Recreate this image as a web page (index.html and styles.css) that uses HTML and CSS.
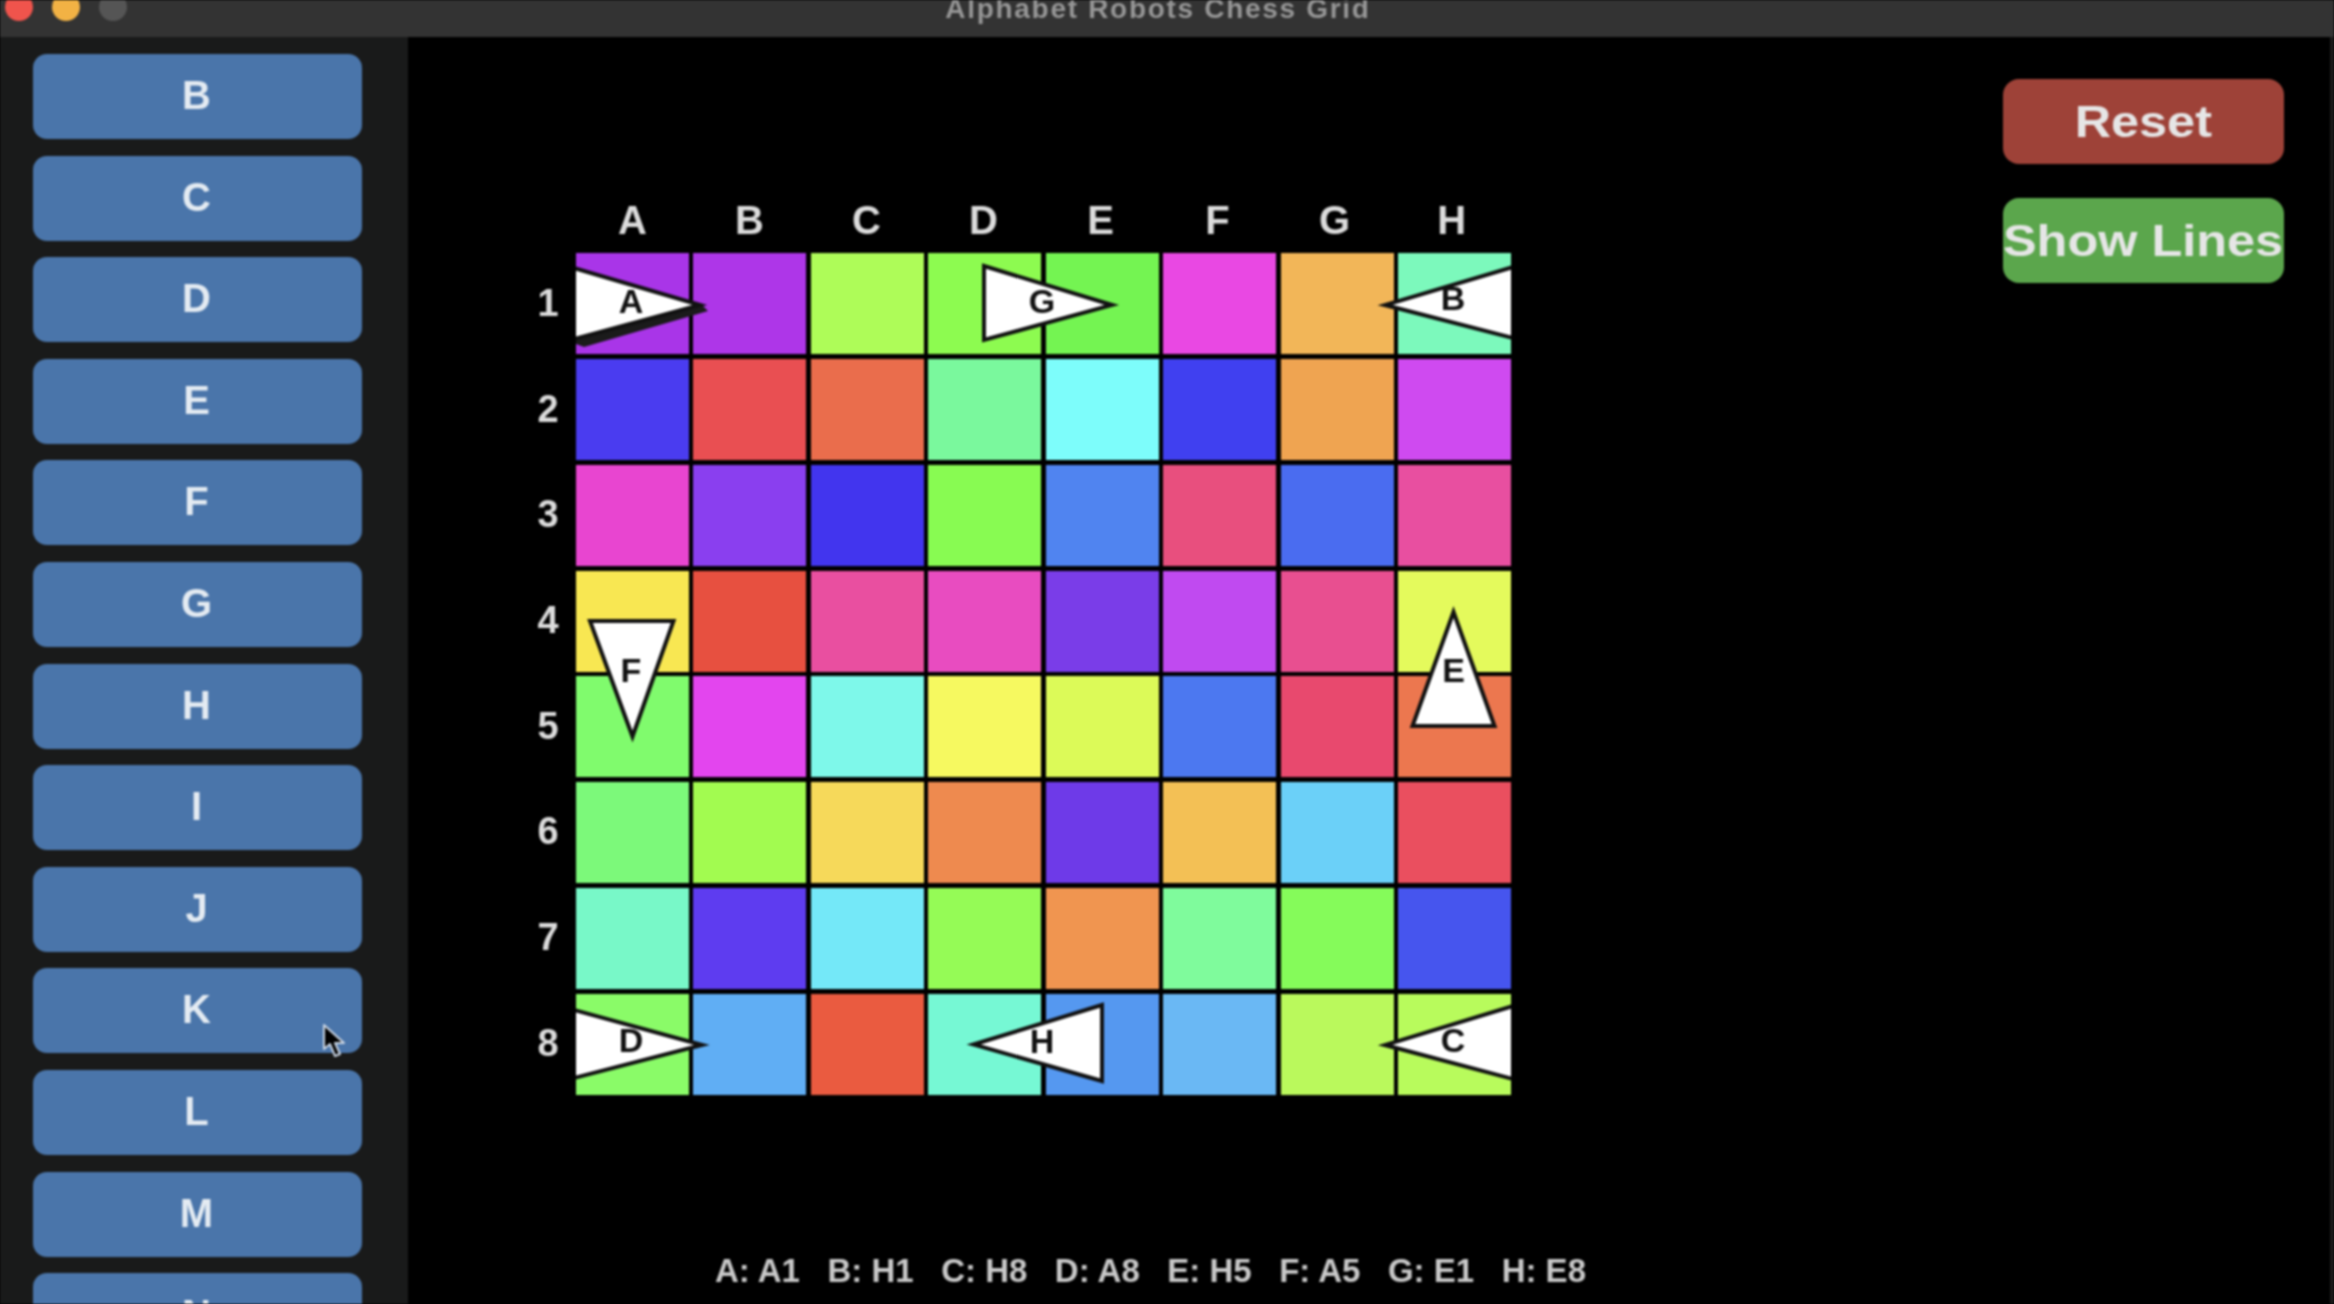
FILE: index.html
```html
<!DOCTYPE html>
<html lang="en">
<head>
<meta charset="utf-8">
<title>Alphabet Robots Chess Grid</title>
<link rel="stylesheet" href="styles.css">
</head>
<body>
<div class="window">
  <header class="titlebar">
    <div class="lights"><i class="light red"></i><i class="light amber"></i><i class="light off"></i></div>
    <div class="title">Alphabet Robots Chess Grid</div>
  </header>
  <div class="content">
    <aside class="sidebar">
      <button class="letter">B</button>
      <button class="letter">C</button>
      <button class="letter">D</button>
      <button class="letter">E</button>
      <button class="letter">F</button>
      <button class="letter">G</button>
      <button class="letter">H</button>
      <button class="letter">I</button>
      <button class="letter">J</button>
      <button class="letter">K</button>
      <button class="letter">L</button>
      <button class="letter">M</button>
      <button class="letter">N</button>
    </aside>
    <main class="main">
      <section class="play">
        <div class="board">
          <div class="corner"></div>
          <div class="col-labels"><span>A</span><span>B</span><span>C</span><span>D</span><span>E</span><span>F</span><span>G</span><span>H</span></div>
          <div class="row-labels"><span>1</span><span>2</span><span>3</span><span>4</span><span>5</span><span>6</span><span>7</span><span>8</span></div>
          <div class="field">
            <div class="cells">
              <div style="background:#a935e8"></div><div style="background:#ae36e8"></div><div style="background:#aefc58"></div><div style="background:#8dfb50"></div><div style="background:#74f452"></div><div style="background:#e948e3"></div><div style="background:#f2b658"></div><div style="background:#7cf9bc"></div>
              <div style="background:#4a3cf0"></div><div style="background:#e94f52"></div><div style="background:#ea6d4c"></div><div style="background:#7af89d"></div><div style="background:#7dfdfb"></div><div style="background:#4040f0"></div><div style="background:#efa451"></div><div style="background:#cf4af0"></div>
              <div style="background:#e845d0"></div><div style="background:#8a3fef"></div><div style="background:#4235ee"></div><div style="background:#88fb52"></div><div style="background:#5084f0"></div><div style="background:#e84f7e"></div><div style="background:#4a6cf0"></div><div style="background:#e84fa0"></div>
              <div style="background:#f8e752"></div><div style="background:#e75040"></div><div style="background:#e94fa0"></div><div style="background:#e84cc0"></div><div style="background:#7a3de8"></div><div style="background:#c04af0"></div><div style="background:#e84f90"></div><div style="background:#e4fa5c"></div>
              <div style="background:#80fb6d"></div><div style="background:#e345ee"></div><div style="background:#7ef8ea"></div><div style="background:#f6f960"></div><div style="background:#dcfa58"></div><div style="background:#4c78f0"></div><div style="background:#e8496e"></div><div style="background:#ec774f"></div>
              <div style="background:#7cf97a"></div><div style="background:#a2fb50"></div><div style="background:#f6d95a"></div><div style="background:#ee8a4f"></div><div style="background:#6e3ae8"></div><div style="background:#f3c055"></div><div style="background:#6bd0f8"></div><div style="background:#ea4f5f"></div>
              <div style="background:#78f8c8"></div><div style="background:#5e3cf0"></div><div style="background:#74e8f8"></div><div style="background:#95fb56"></div><div style="background:#f09550"></div><div style="background:#7ffb9c"></div><div style="background:#85fb5a"></div><div style="background:#4655ee"></div>
              <div style="background:#8afb68"></div><div style="background:#60aef4"></div><div style="background:#ea5b40"></div><div style="background:#76f8d4"></div><div style="background:#5598f0"></div><div style="background:#6ab8f4"></div><div style="background:#baf95c"></div><div style="background:#b8fb5c"></div>
            </div>
            <svg class="robots" viewBox="0 0 935 842" width="935" height="842" aria-label="Robots">
              <polygon class="trail" points="0,84 124,50 132,58 8,94 0,91"/>
              <polygon class="robot" points="-2,15 124,52 -2,86"/>
              <text x="55" y="60">A</text>
              <polygon class="robot" points="408,13 536,52 408,87"/>
              <text x="466" y="60">G</text>
              <polygon class="robot" points="937,14 809,52 937,85"/>
              <text x="877" y="57">B</text>
              <polygon class="robot" points="526,752 397.5,791.5 526,828"/>
              <text x="466" y="800">H</text>
              <polygon class="robot" points="937,753 809,792 937,826"/>
              <text x="877" y="799">C</text>
              <polygon class="robot" points="-2,757 126,792 -2,825"/>
              <text x="55" y="799">D</text>
              <polygon class="robot" points="14,368 97.5,368 56.5,483.5"/>
              <text x="55" y="429">F</text>
              <polygon class="robot" points="877.5,359 836.5,473 918.5,473"/>
              <text x="877.5" y="429">E</text>
            </svg>
          </div>
        </div>
        <div class="status">
          <span>A: A1</span><span>B: H1</span><span>C: H8</span><span>D: A8</span><span>E: H5</span><span>F: A5</span><span>G: E1</span><span>H: E8</span>
        </div>
      </section>
      <div class="actions">
        <button class="action reset"><span>Reset</span></button>
        <button class="action lines"><span>Show Lines</span></button>
      </div>
    </main>
  </div>
  <svg class="cursor" viewBox="0 0 26 38" width="26" height="38" aria-hidden="true">
    <path d="M3 2 L3 26 L9 21 L14 33 L19 31 L14 20 L23 20 Z" fill="#000" stroke="#c9d4e2" stroke-width="2" stroke-linejoin="round"/>
  </svg>
</div>
</body>
</html>
```

FILE: styles.css
```css
* { box-sizing: border-box; }
html, body { margin: 0; height: 100%; background: #000; overflow: hidden; }
body { font-family: "Liberation Sans", Arial, sans-serif; }

.window {
  position: relative;
  width: 2334px;
  height: 1304px;
  display: flex;
  flex-direction: column;
  overflow: hidden;
  filter: blur(1.3px);
  background: #000;
}

.titlebar {
  position: relative;
  flex: 0 0 37px;
  background: #333;
  overflow: hidden;
  display: flex;
  justify-content: center;
}
.lights {
  position: absolute;
  left: 5px;
  top: -7px;
  display: flex;
  gap: 19px;
}
.light { width: 28px; height: 28px; border-radius: 50%; display: block; }
.red { background: #f0544c; }
.amber { background: #f2b244; }
.off { background: #555; }
.title {
  margin: -8px 18px 0 0;
  font-size: 28px;
  line-height: 34px;
  font-weight: bold;
  color: #969696;
  letter-spacing: 1.7px;
}

.content { flex: 1; display: flex; min-height: 0; }

.sidebar {
  flex: 0 0 408px;
  background: #191a1a;
  padding: 17px 46px 0 33px;
  display: flex;
  flex-direction: column;
  gap: 16.6px;
  overflow: hidden;
}
.letter {
  flex: 0 0 85px;
  width: 100%;
  border: 0;
  padding: 0 2px 2px 0;
  border-radius: 14px;
  background: #4a75aa;
  color: #e4ebf2;
  font-family: inherit;
  font-size: 40px;
  font-weight: bold;
}

.main {
  flex: 1;
  display: flex;
  justify-content: space-between;
  padding: 42px 46px 0 112px;
  background: #000;
  border-right: 4px solid #1a1a1a;
}

.play { padding-top: 115px; }

.board {
  display: grid;
  grid-template-columns: 56px 935px;
  grid-template-rows: 59px 842px;
}
.col-labels {
  display: grid;
  grid-template-columns: repeat(8, 1fr);
  gap: 4.4px;
  height: 50px;
  padding-right: 3px;
  text-align: center;
  font-size: 40px;
  line-height: 52px;
  font-weight: bold;
  color: #dcdcdc;
}
.row-labels {
  display: grid;
  grid-template-rows: repeat(8, 1fr);
  gap: 4.9px;
  padding-bottom: 1.5px;
  text-align: center;
  font-size: 38px;
  font-weight: bold;
  color: #dcdcdc;
}
.row-labels span { align-self: center; }

.field { position: relative; background: #000; }
.cells {
  display: grid;
  grid-template-columns: repeat(8, 1fr);
  grid-template-rows: repeat(8, 1fr);
  gap: 4.9px;
  width: 100%;
  height: 100%;
}
.robots { position: absolute; left: 0; top: 0; overflow: hidden; }
.robot { fill: #fff; stroke: #111; stroke-width: 4; stroke-linejoin: miter; }
.trail { fill: #1b1b1b; }
.robots text {
  font-family: "Liberation Sans", Arial, sans-serif;
  font-size: 34px;
  font-weight: bold;
  fill: #111;
  text-anchor: middle;
}

.status {
  margin: 156px 0 0 195px;
  display: flex;
  gap: 27.5px;
  height: 40px;
  font-size: 33px;
  line-height: 40px;
  font-weight: bold;
  color: #c8c8c8;
  white-space: nowrap;
}

.actions { display: flex; flex-direction: column; gap: 34px; width: 281px; }
.action {
  height: 85px;
  border: 0;
  padding: 0;
  border-radius: 16px;
  color: #e6e6e6;
  font-family: inherit;
  font-size: 45px;
  font-weight: bold;
  white-space: nowrap;
  display: flex;
  align-items: center;
  justify-content: center;
}
.action span { display: inline-block; transform: scaleX(1.12); }
.reset { background: #9e4238; }
.lines { background: #5ba64c; }

.cursor { position: absolute; left: 321px; top: 1023px; }
```
